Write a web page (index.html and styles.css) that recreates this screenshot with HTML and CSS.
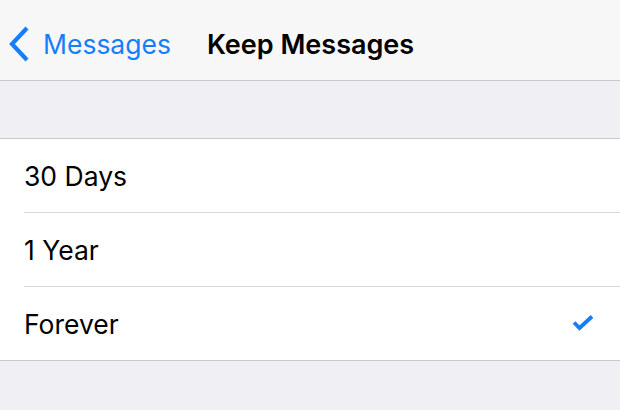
FILE: index.html
```html
<!DOCTYPE html>
<html lang="en">
<head>
  <meta charset="UTF-8" />
  <title>Keep Messages</title>
  <link rel="stylesheet" href="styles.css">
</head>
<body>
  <div class="navbar">
    <a href="#" class="back-link">
      <svg class="chevron" width="24" height="36" viewBox="0 0 24 36">
        <path d="M20 2 L5 18 L20 34" fill="none" stroke="#157efb" stroke-width="4.2"/>
      </svg>
      <span>Messages</span>
    </a>
    <h1 class="title">Keep Messages</h1>
  </div>

  <div class="section-gap"></div>

  <ul class="options">
    <li class="option">30 Days</li>
    <li class="option">1 Year</li>
    <li class="option selected">
      Forever
      <svg class="check" width="22" height="17" viewBox="0 0 22 17">
        <path d="M2 7.5 L7.5 13 L20 1.5" fill="none" stroke="#157efb" stroke-width="3.8"/>
      </svg>
    </li>
  </ul>
</body>
</html>
```

FILE: styles.css
```css
body {
  margin: 0;
  font-family: 'Inter', 'Liberation Sans', sans-serif;
  background-color: #EFEFF4;
  color: #000;
  height: 410px;
  overflow: hidden;
}
.navbar {
  height: 81px;
  box-sizing: border-box;
  padding-top: 8px;
  background: #F7F7F8;
  border-bottom: 1px solid #C8C7CC;
  display: flex;
  align-items: center;
}
.back-link {
  display: flex;
  align-items: center;
  color: #157EFB;
  text-decoration: none;
  font-size: 26.5px;
  padding-left: 7px;
  gap: 12px;
}
.title {
  margin: 0 0 0 36px;
  font-size: 27px;
  font-weight: 600;
}
.section-gap {
  height: 57px;
  border-bottom: 1px solid #C8C7CC;
}
.options {
  list-style: none;
  margin: 0;
  padding: 0 0 0 24px;
  background: white;
  border-bottom: 1px solid #C8C7CC;
}
.option {
  height: 73px;
  display: flex;
  align-items: center;
  justify-content: space-between;
  padding-right: 26px;
  font-size: 26.5px;
  border-bottom: 1px solid #D8D8DC;
}
.option:last-child {
  border-bottom: none;
}
```
